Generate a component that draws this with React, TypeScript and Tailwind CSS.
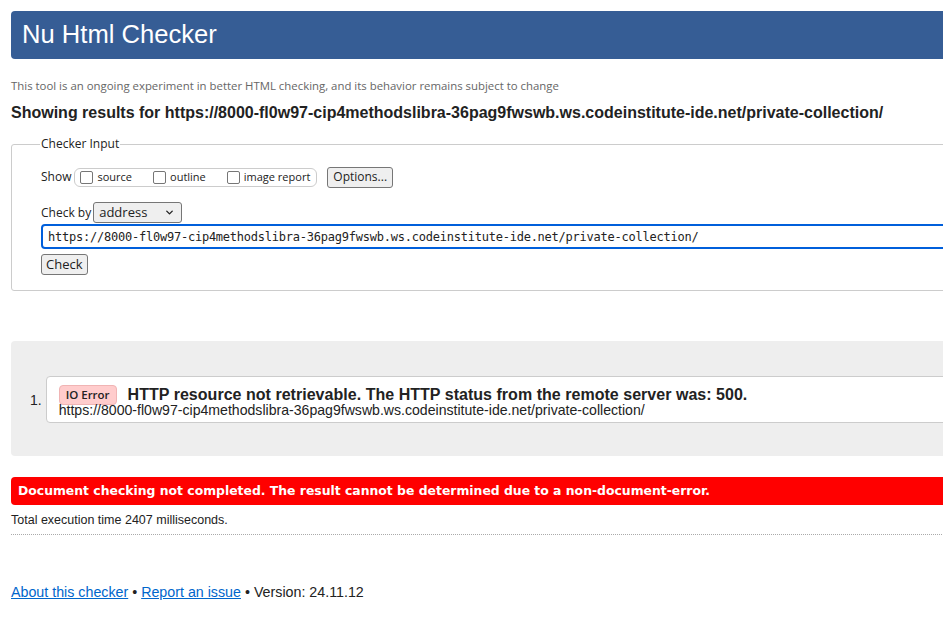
import { ChevronDown } from 'lucide-react';

const url = 'https://8000-fl0w97-cip4methodslibra-36pag9fwswb.ws.codeinstitute-ide.net/private-collection/';

const arial = 'font-["Liberation_Sans",Arial,sans-serif]';
const ui = 'font-["Open_Sans","Noto_Sans",sans-serif]';

function Box({ label }: { label: string }) {
  return (
    <label className="flex items-center gap-[4px] mr-[21px] last:mr-0">
      <span className="w-[13px] h-[13px] border border-[#767676] rounded-[2px] bg-white" />
      <span>{label}</span>
    </label>
  );
}

export default function App() {
  return (
    <div className="w-[943px] h-[637px] overflow-hidden bg-white text-[#222]">
      <div className="w-[1000px] pl-[11px]">
        {/* Header */}
        <div className="mt-[11px] h-[48px] bg-[#365d95] rounded-[4px] flex items-center pl-[11px]">
          <h1 className={`${arial} text-[25.6px] text-white leading-none`}>Nu Html Checker</h1>
        </div>

        <p className={`${ui} text-[11.4px] text-[#666] mt-[21px] leading-none`}>
          This tool is an ongoing experiment in better HTML checking, and its behavior remains subject to change
        </p>

        <h2 className={`${arial} font-bold text-[16px] mt-[14px] leading-none`}>
          Showing results for {url}
        </h2>

        {/* Checker input */}
        <fieldset className={`${ui} mt-[14px] border border-[#ccc] rounded-[3px] pl-[29px] pb-[15px] text-[12px] text-[#222]`}>
          <legend className="px-[1px] -ml-[1px]">Checker Input</legend>
          <div className="flex items-center mt-[14px] h-[20px]">
            <span className="mr-[3px]">Show</span>
            <div className="flex items-center h-[19px] border border-[#ccc] rounded-[6px] pl-[5px] pr-[6px] text-[11px]">
              <Box label="source" />
              <Box label="outline" />
              <Box label="image report" />
            </div>
            <button className="ml-[10px] h-[21px] px-[5px] border border-[#767676] rounded-[3px] bg-[#efefef] text-[12px]">
              Options...
            </button>
          </div>
          <div className="flex items-center mt-[15px] h-[21px]">
            <span className="mr-[2px]">Check by</span>
            <div className="w-[89px] h-[21px] border border-[#767676] rounded-[3px] bg-[#efefef] flex items-center justify-between pl-[5px] pr-[6px] text-[13px]">
              <span>address</span>
              <ChevronDown className="w-[11px] h-[11px]" strokeWidth={3} />
            </div>
          </div>
          <div className="mt-[1px] h-[25px] border-2 border-[#005fdb] rounded-[4px] flex items-center pl-[5px]">
            <span className="font-['DejaVu_Sans_Mono',monospace] text-[12px] text-[#222] tracking-[-0.23px]">{url}</span>
          </div>
          <button className="mt-[5px] h-[21px] px-[4px] border border-[#767676] rounded-[3px] bg-[#efefef] text-[13px]">
            Check
          </button>
        </fieldset>

        {/* Results */}
        <div className="mt-[50px] h-[115px] bg-[#eee] rounded-[4px] flex items-center pl-[19px]">
          <span className={`${arial} text-[14px] mr-[4px] mt-[3px]`}>1.</span>
          <div className="flex-1 h-[47px] mt-[1px] bg-white border border-[#ccc] rounded-[4px] pl-[12px] pt-[6px]">
            <div className="flex items-center">
              <span className={`${ui} font-semibold text-[11.5px] bg-[#fcc] border border-[#f0b4b4] rounded-[4px] px-[6px] h-[20px] flex items-center`}>
                IO Error
              </span>
              <span className={`${arial} font-bold text-[16px] ml-[11px] tracking-[0.03px]`}>
                HTTP resource not retrievable. The HTTP status from the remote server was: 500.
              </span>
            </div>
            <div className={`${arial} text-[14.1px] leading-none -mt-[4px]`}>{url}</div>
          </div>
        </div>

        {/* Status */}
        <div className="mt-[21px] h-[28px] bg-[#f00] rounded-l-[4px] flex items-center pl-[7px]">
          <span className={`font-['DejaVu_Sans',Verdana,sans-serif] font-bold text-white text-[12.4px]`}>
            Document checking not completed. The result cannot be determined due to a non-document-error.
          </span>
        </div>
        <p className={`${arial} text-[12.5px] mt-[9px] leading-none`}>Total execution time 2407 milliseconds.</p>
        <div className="mt-[7px] border-t border-dotted border-[#aaa]" />

        {/* Footer */}
        <p className={`${arial} text-[14.25px] mt-[47px]`}>
          <a href="#" className="text-[#0066cc] underline">About this checker</a>
          {' • '}
          <a href="#" className="text-[#0066cc] underline">Report an issue</a>
          {' • Version: 24.11.12'}
        </p>
      </div>
    </div>
  );
}
